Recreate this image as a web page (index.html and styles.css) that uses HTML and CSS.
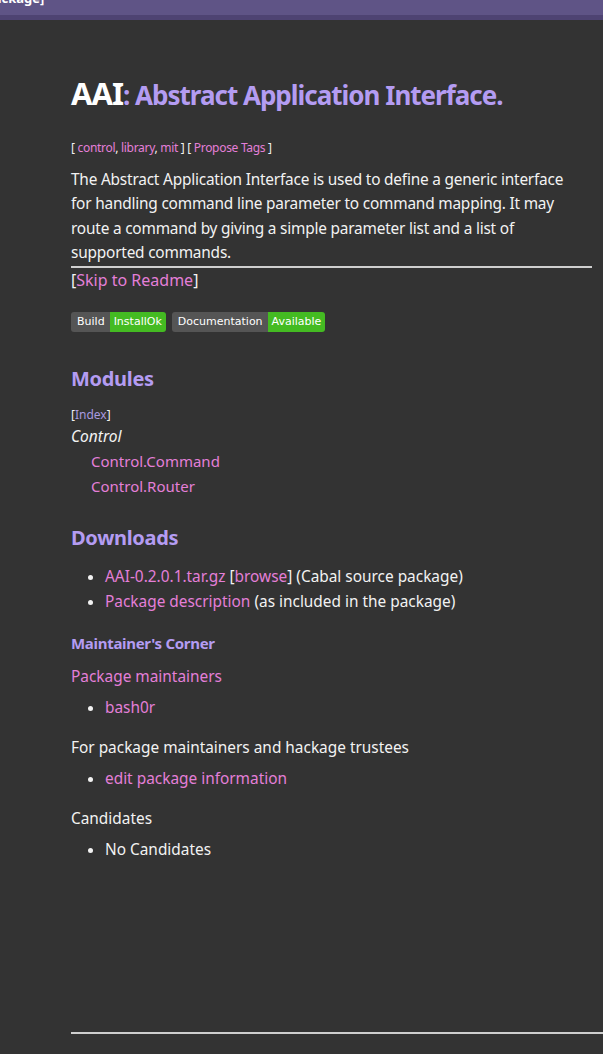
FILE: index.html
```html
<!DOCTYPE html>
<html>
<head>
<meta charset="utf-8">
<link rel="stylesheet" href="styles.css">
</head>
<body>
<div class="topbar"><span class="brand">[hackage]</span></div>
<div class="strip"></div>
<main class="content">
  <h1 class="title">AAI<small>: Abstract Application Interface.</small></h1>
  <div class="tags">[ <a href="#">control</a>, <a href="#">library</a>, <a href="#">mit</a> ] [ <a href="#">Propose Tags</a> ]</div>
  <div class="desc">
    <p>The Abstract Application Interface is used to define a generic interface for handling command line parameter to command mapping. It may route a command by giving a simple parameter list and a list of supported commands.</p>
  </div>
  <div class="skip">[<a href="#">Skip to Readme</a>]</div>
  <div class="badges">
    <span class="badge"><span class="bl">Build</span><span class="br">InstallOk</span></span>
    <span class="badge"><span class="bl">Documentation</span><span class="br">Available</span></span>
  </div>
  <h2>Modules</h2>
  <div class="index">[<a href="#" class="visited">Index</a>]</div>
  <div class="modtree">
    <div class="modcat">Control</div>
    <ul class="mods">
      <li><a href="#">Control.Command</a></li>
      <li><a href="#">Control.Router</a></li>
    </ul>
  </div>
  <h2 class="h2-dl">Downloads</h2>
  <ul class="bullets b-first">
    <li><a href="#">AAI-0.2.0.1.tar.gz</a> [<a href="#">browse</a>] (Cabal source package)</li>
    <li><a href="#">Package description</a> (as included in the package)</li>
  </ul>
  <h3>Maintainer's Corner</h3>
  <p class="pl pl-first"><a href="#">Package maintainers</a></p>
  <ul class="bullets">
    <li><a href="#">bash0r</a></li>
  </ul>
  <p class="pl">For package maintainers and hackage trustees</p>
  <ul class="bullets">
    <li><a href="#">edit package information</a></li>
  </ul>
  <p class="pl">Candidates</p>
  <ul class="bullets">
    <li>No Candidates</li>
  </ul>
  <hr class="foot">
</main>
</body>
</html>
```
FILE: styles.css
```css
html, body {
  margin: 0;
  padding: 0;
  background: #333333;
  color: #f2f2f2;
  font-family: "Noto Sans", "Open Sans", sans-serif;
  font-size: 15.4px;
}
a { color: #e47fd8; text-decoration: none; }
a.visited { color: #a99be0; }

.topbar {
  height: 15px;
  background: #5f5486;
  overflow: hidden;
}
.brand {
  display: block;
  margin-top: -10px;
  margin-left: -19px;
  color: #fff;
  font-weight: bold;
  font-size: 13px;
  line-height: 16px;
}
.strip { height: 5px; background: #4e4372; }

.content {
  padding: 0 0 0 71px;
  width: 540px;
}
.title {
  margin: 54px 0 0;
  font-size: 31px;
  line-height: 38px;
  font-weight: bold;
  color: #ffffff;
  letter-spacing: -1px;
}
.title small {
  font-size: 26px;
  color: #b49cf2;
  letter-spacing: -1px;
}
.tags {
  margin-top: 25px;
  font-size: 12px;
  line-height: 18px;
  letter-spacing: -0.3px;
}
.desc {
  margin-top: 11px;
  width: 521px;
  border-bottom: 2px solid #cfcfcf;
}
.desc p {
  margin: 0;
  width: 505px;
  font-size: 15.4px;
  line-height: 24.4px;
  letter-spacing: -0.2px;
}
.skip {
  font-size: 16px;
  line-height: 22px;
  margin-top: 1px;
}
.badges {
  display: flex;
  gap: 6px;
  margin-top: 21px;
}
.badge {
  display: flex;
  height: 20px;
  border-radius: 3px;
  overflow: hidden;
  font-family: "DejaVu Sans", Verdana, sans-serif;
  font-size: 11px;
  line-height: 20px;
  color: #fff;
}
.bl { background: #555555; padding: 0 5px 0 6px; }
.br { background: #44bb22; padding: 0 4px 0 4px; }

h2 {
  margin: 33px 0 0;
  font-size: 20px;
  line-height: 28px;
  color: #b49cf2;
  font-weight: bold;
  letter-spacing: -0.3px;
}
.h2-dl { margin-top: 25px; }
.index {
  margin-top: 13px;
  font-size: 12px;
  line-height: 18px;
}
.modcat {
  font-style: italic;
  font-size: 15.5px;
  line-height: 24px;
}
.mods {
  list-style: none;
  margin: 1px 0 0;
  padding: 0 0 0 20px;
}
.mods li {
  font-size: 15px;
  line-height: 25px;
}
.bullets {
  margin: 6.5px 0 0;
  padding: 0 0 0 34px;
}
.bullets.b-first { margin-top: 12.5px; }
.bullets li {
  font-size: 15.4px;
  line-height: 25px;
}
h3 {
  margin: 16.5px 0 0;
  font-size: 15px;
  line-height: 24px;
  color: #b49cf2;
  font-weight: bold;
  letter-spacing: -0.3px;
}
.pl {
  margin: 15.5px 0 0;
  font-size: 15.4px;
  line-height: 24px;
}
.pl.pl-first { margin-top: 10px; }
.foot {
  margin: 170px 0 0;
  border: 0;
  height: 2px;
  background: #cfcfcf;
  width: 540px;
}
```
